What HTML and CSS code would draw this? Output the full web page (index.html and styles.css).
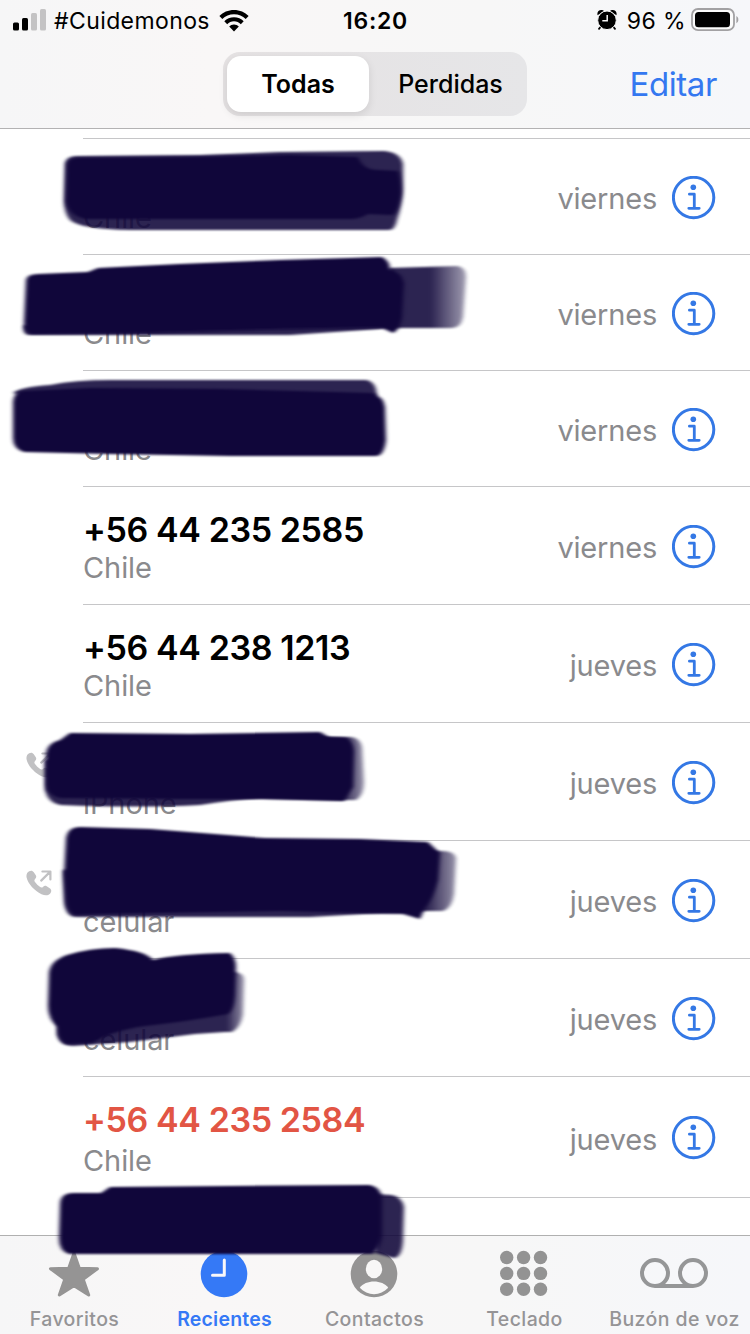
FILE: index.html
```html
<!DOCTYPE html>
<html lang="es">
<head>
  <meta charset="UTF-8">
  <meta name="viewport" content="width=device-width, initial-scale=1.0">
  <title>Recientes</title>
  <link rel="stylesheet" href="styles.css">
</head>
<body>

  <!-- Shared symbols -->
  <svg class="defs" width="0" height="0">
    <symbol id="info" viewBox="0 0 44 44">
      <circle cx="21.600" cy="21.500" r="20.200" fill="none" stroke="#3478e5" stroke-width="3"/>
      <circle cx="21.300" cy="11.200" r="2.800" fill="#3478e5"/>
      <path d="M17.400 18.200H22.300V32.200M16.800 32.300H27.200" fill="none" stroke="#3478e5" stroke-width="2.800" stroke-linecap="round" stroke-linejoin="round"/>
    </symbol>
    <symbol id="outgoing" viewBox="0 0 26 26">
      <path d="M3.200 1.200C5 .2 6.800 .6 7.800 2.200L9.800 5.300C10.600 6.700 10.300 7.800 9.100 9C8 10.100 8.200 10.900 9.400 12.500C10.600 14.200 11.900 15.500 13.500 16.600C15.100 17.800 15.900 18 17 16.900C18.200 15.700 19.300 15.500 20.700 16.300L23.700 18.200C25.500 19.400 25.700 21.200 24.600 22.900C22.900 25.400 19.800 26.200 15.500 24.200C8.600 21 1.800 13.600 .6 7.500C0 4.400 1.200 2.300 3.200 1.200Z" fill="#c1c1c3"/>
      <path d="M15.200 10.600L24 1.900M16.400 1.500H24.400V9.500" fill="none" stroke="#c1c1c3" stroke-width="2.200" stroke-linecap="round" stroke-linejoin="round"/>
    </symbol>
  </svg>

  <div class="phone">
    <header class="header">
      <!-- Status bar -->
      <div class="status-bar">
        <div class="status-left">
          <svg class="signal" width="34" height="22" viewBox="0 0 34 22">
            <rect x="0" y="13.500" width="6" height="8" rx="1.500"/>
            <rect x="9" y="9" width="6" height="12.500" rx="1.500"/>
            <rect x="18" y="4" width="6" height="17.500" rx="1.500" fill="#c4c3c4"/>
            <rect x="27" y="0" width="6" height="21.500" rx="1.500" fill="#c4c3c4"/>
          </svg>
          <span class="carrier">#Cuidemonos</span>
          <svg class="wifi" width="30" height="22" viewBox="0 0 30 22">
            <path d="M15 0C9.200 0 4 2.300 .4 6L3.300 9C6.300 5.900 10.400 4.200 15 4.200S23.700 5.900 26.700 9L29.600 6C26 2.300 20.800 0 15 0Z"/>
            <path d="M15 7.200C11.200 7.200 7.800 8.700 5.300 11.200L8.200 14.200C10 12.400 12.300 11.300 15 11.300S20 12.400 21.800 14.200L24.700 11.200C22.200 8.700 18.800 7.200 15 7.200Z"/>
            <path d="M15 14.400C13.100 14.400 11.400 15.200 10.200 16.400L15 21.500L19.800 16.400C18.600 15.200 16.900 14.400 15 14.400Z"/>
          </svg>
        </div>
        <div class="clock">16:20</div>
        <div class="status-right">
          <svg class="alarm" width="20" height="20" viewBox="0 0 20 20">
            <path d="M.6 5.200C-.3 2.500 1.600 .1 4.300 .1C5.500 .1 6.300 .5 6.900 1.100ZM19.400 5.200C20.300 2.500 18.400 .1 15.700 .1C14.500 .1 13.700 .5 13.100 1.100Z"/>
            <path d="M3.500 17L2 18.800M16.500 17L18 18.800" stroke="#000" stroke-width="1.800" stroke-linecap="round"/>
            <circle cx="10" cy="10.300" r="9.300" stroke="#f7f7f7" stroke-width="1"/>
            <path d="M10.200 5V10.700H5.300" fill="none" stroke="#f7f7f7" stroke-width="1.500"/>
          </svg>
          <span class="percent">96 %</span>
          <svg class="battery" width="48" height="24" viewBox="0 0 48 24">
            <rect x="1" y="1" width="42" height="21.200" rx="6" fill="#fbfbfb" stroke="#a2a1a3" stroke-width="1.800"/>
            <rect x="4" y="4" width="35" height="15.200" rx="3.500"/>
            <path d="M45.400 8C48 9.500 48 13.800 45.400 15.200Z" fill="#a2a1a3"/>
          </svg>
        </div>
      </div>

      <!-- Filter and edit -->
      <div class="nav-bar">
        <div class="segmented">
          <div class="segment selected">Todas</div>
          <div class="segment">Perdidas</div>
        </div>
        <div class="edit">Editar</div>
      </div>
    </header>

    <!-- Call list -->
    <main class="calls">
      <div class="call short">
        <div class="call-type"></div>
        <div class="call-body">
          <div class="caller"><div class="name"></div><div class="label">Chile</div></div>
          <div class="day">viernes</div>
          <svg class="info"><use href="#info"/></svg>
        </div>
      </div>
      <div class="call short">
        <div class="call-type"></div>
        <div class="call-body">
          <div class="caller"><div class="name"></div><div class="label">Chile</div></div>
          <div class="day">viernes</div>
          <svg class="info"><use href="#info"/></svg>
        </div>
      </div>
      <div class="call short">
        <div class="call-type"></div>
        <div class="call-body">
          <div class="caller"><div class="name"></div><div class="label">Chile</div></div>
          <div class="day">viernes</div>
          <svg class="info"><use href="#info"/></svg>
        </div>
      </div>
      <div class="call">
        <div class="call-type"></div>
        <div class="call-body">
          <div class="caller"><div class="name">+56 44 235 2585</div><div class="label">Chile</div></div>
          <div class="day">viernes</div>
          <svg class="info"><use href="#info"/></svg>
        </div>
      </div>
      <div class="call">
        <div class="call-type"></div>
        <div class="call-body">
          <div class="caller"><div class="name">+56 44 238 1213</div><div class="label">Chile</div></div>
          <div class="day">jueves</div>
          <svg class="info"><use href="#info"/></svg>
        </div>
      </div>
      <div class="call">
        <div class="call-type"><svg class="outgoing"><use href="#outgoing"/></svg></div>
        <div class="call-body">
          <div class="caller"><div class="name"></div><div class="label">iPhone</div></div>
          <div class="day">jueves</div>
          <svg class="info"><use href="#info"/></svg>
        </div>
      </div>
      <div class="call">
        <div class="call-type"><svg class="outgoing"><use href="#outgoing"/></svg></div>
        <div class="call-body">
          <div class="caller"><div class="name"></div><div class="label">celular</div></div>
          <div class="day">jueves</div>
          <svg class="info"><use href="#info"/></svg>
        </div>
      </div>
      <div class="call">
        <div class="call-type"></div>
        <div class="call-body">
          <div class="caller"><div class="name"></div><div class="label">celular</div></div>
          <div class="day">jueves</div>
          <svg class="info"><use href="#info"/></svg>
        </div>
      </div>
      <div class="call tall missed">
        <div class="call-type"></div>
        <div class="call-body">
          <div class="caller"><div class="name">+56 44 235 2584</div><div class="label">Chile</div></div>
          <div class="day">jueves</div>
          <svg class="info"><use href="#info"/></svg>
        </div>
      </div>
      <div class="call last">
        <div class="call-type"></div>
        <div class="call-body"></div>
      </div>
    </main>

    <!-- Tab bar -->
    <nav class="tab-bar">
      <div class="tab">
        <svg width="52" height="48" viewBox="0 0 52 48">
          <path d="M26 3L31.300 18.200L49.500 18.700L35.200 29.300L40.700 45L26 35.700L11.300 45L16.800 29.300L2.500 18.700L20.700 18.200Z" fill="#959494" stroke="#959494" stroke-width="3" stroke-linejoin="round"/>
        </svg>
        <span>Favoritos</span>
      </div>
      <div class="tab active">
        <svg width="48" height="48" viewBox="0 0 48 48">
          <circle cx="24" cy="24" r="23.300" fill="#3579f6"/>
          <path d="M24.300 10V25.200H12.500" fill="none" stroke="#f9f7f9" stroke-width="3" stroke-linecap="round" stroke-linejoin="round"/>
        </svg>
        <span>Recientes</span>
      </div>
      <div class="tab">
        <svg width="48" height="48" viewBox="0 0 48 48">
          <circle cx="24" cy="24" r="23.300" fill="#959494"/>
          <ellipse cx="24" cy="19" rx="8.200" ry="9.200" fill="#f8f7f7"/>
          <path d="M9.800 37.700C15.500 29.300 32.500 29.300 38.200 37.700C30.500 46.300 17.500 46.300 9.800 37.700Z" fill="#f8f7f7"/>
        </svg>
        <span>Contactos</span>
      </div>
      <div class="tab">
        <svg width="48" height="48" viewBox="0 0 48 48" fill="#939393">
          <circle cx="6.700" cy="7.500" r="6.700"/><circle cx="23.600" cy="7.500" r="6.700"/><circle cx="40.500" cy="7.500" r="6.700"/>
          <circle cx="6.700" cy="23.400" r="6.700"/><circle cx="23.600" cy="23.400" r="6.700"/><circle cx="40.500" cy="23.400" r="6.700"/>
          <circle cx="6.700" cy="39.200" r="6.700"/><circle cx="23.600" cy="39.200" r="6.700"/><circle cx="40.500" cy="39.200" r="6.700"/>
        </svg>
        <span>Teclado</span>
      </div>
      <div class="tab">
        <svg width="70" height="48" viewBox="0 0 70 48" fill="none" stroke="#959697" stroke-width="4">
          <circle cx="16" cy="23" r="13"/><circle cx="54" cy="23" r="13"/>
          <path d="M16 36H54"/>
        </svg>
        <span>Buzón de voz</span>
      </div>
    </nav>

    <!-- Marker strokes covering the names -->
    <svg class="marker" viewBox="0 0 750 1334">
      <defs>
        <filter id="soft" x="-5%" y="-10%" width="110%" height="120%" color-interpolation-filters="sRGB">
          <feGaussianBlur stdDeviation="2 1.100"/>
        </filter>
        <linearGradient id="fade">
          <stop offset="0.550" stop-color="#10063a"/>
          <stop offset="1" stop-color="#10063a" stop-opacity="0.450"/>
        </linearGradient>
        <linearGradient id="fade-short">
          <stop offset="0.100" stop-color="#10063a"/>
          <stop offset="1" stop-color="#10063a" stop-opacity="0.500"/>
        </linearGradient>
      </defs>
      <g class="wash" filter="url(#soft)">
        <path d="M65 163Q67 156 76 156L200 155L280 152L385 151Q401 153 403 164L403 190Q402 205 397 220Q395 230 389 230L130 230Q80 229 70 220Q64 213 64 200Z"/>
        <path d="M388 268L458 266Q466 268 466 277L463 317Q461 328 452 328L390 328Z" fill="url(#fade)"/>
        <path d="M24 325L150 330L395 325L380 329L290 335L28 335Q22 333 24 325Z"/>
        <path d="M13 393Q20 387 50 385Q75 380 110 380L367 380Q376 382 377 395L370 400L40 400Z"/>
        <path d="M45 760L45 790Q48 803 60 805Q140 808 200 805Q230 800 262 798L340 800L340 737L320 737Z"/>
        <path d="M340 737L351 737Q360 738 362 747L364 782Q364 795 356 800L340 800Z" fill="url(#fade-short)"/>
        <path d="M63 870L64 900Q65 917 76 917L310 917L400 912L424 911L424 845Z"/>
        <path d="M424 851L443 851Q454 851 456 858L454 894Q452 908 443 911L424 911Z" fill="url(#fade-short)"/>
        <path d="M57 1015L57 1035Q60 1046 72 1046L130 1042L195 1034L225 1032L225 972Z"/>
        <path d="M225 972L235 972Q244 973 244 980L243 1014Q241 1027 232 1032L225 1032Z" fill="url(#fade-short)"/>
        <path d="M375 1194L392 1195Q402 1197 404 1207L403 1240Q402 1257 394 1258L375 1253Z"/>
      </g>
      <g class="ink" filter="url(#soft)">
        <path d="M67 165Q68 158 78 158L200 157L290 155L358 157Q363 170 378 170L398 171Q401 180 401 194Q398 213 392 215L368 214Q360 219 350 219L85 219Q69 215 66 202Z"/>
        <path d="M26 280Q27 274 38 274L88 272L98 268L180 264L280 260L350 258L382 257Q390 261 390 269Q402 273 404 283L402 318Q399 331 393 333L382 328L270 330L150 333L35 334Q24 335 24 322Z"/>
        <path d="M13 402Q14 391 25 391L90 388L220 389L372 393Q384 397 385 407L386 440Q384 456 376 456L230 456L110 454L24 452Q13 449 13 438Z"/>
        <path d="M46 754Q47 743 60 740L70 733L190 734L320 732L329 737L347 738Q354 743 354 752L353 787L344 801L260 799L180 799L60 798Q47 795 46 785Z"/>
        <path d="M66 838Q68 827 80 827L150 829Q215 834 265 838L360 839L428 842L440 853L438 880Q433 899 425 908L420 919L403 914L280 911L100 914L74 915Q66 910 66 898L64 875Z"/>
        <path d="M49 973Q50 961 67 955Q90 948 115 948Q146 951 153 960Q175 954 230 953Q236 958 236 967L235 995Q234 1010 228 1014Q190 1021 145 1026Q110 1031 93 1043L66 1044Q57 1039 58 1027Q48 1020 48 1005Z"/>
        <path d="M60 1205Q60 1193 73 1193L101 1193L110 1187L230 1186L370 1185Q382 1188 382 1200L382 1236Q380 1248 373 1254L69 1254Q59 1251 59 1238Z"/>
      </g>
    </svg>
  </div>

</body>
</html>
```
FILE: styles.css
```css
body {
  margin: 0;
  background-color: #fff;
  font-family: Inter, "Liberation Sans", sans-serif;
  color: #000;
}
.defs {
  position: absolute;
}
.phone {
  position: relative;
  display: flex;
  flex-direction: column;
  width: 750px;
  height: 1334px;
  overflow: hidden;
}
.header {
  box-sizing: border-box;
  height: 129px;
  border-bottom: 1px solid #b3b2b3;
  background: linear-gradient(to right, #f6f6f7, #f9f7f7 28%, #f7f7f7 65%, #f6f7fa);
}

/* Status bar */
.status-bar {
  display: grid;
  grid-template-columns: 1fr auto 1fr;
  align-items: center;
  height: 42px;
  padding: 0 12px 0 13px;
  font-size: 23px;
}
.status-left, .status-right {
  display: flex;
  align-items: center;
}
.status-right {
  justify-content: flex-end;
}
.signal {
  margin-bottom: 3px;
}
.carrier {
  margin-left: 7px;
  letter-spacing: 0.4px;
}
.wifi {
  margin: 0 0 1px 9px;
}
.clock {
  font-weight: 600;
  letter-spacing: 0.7px;
}
.alarm {
  margin: 0 10px 3px 0;
}
.percent {
  letter-spacing: 0.4px;
}
.battery {
  margin: 0 -1px 3px 5px;
}

/* Navigation bar */
.nav-bar {
  display: grid;
  grid-template-columns: 1fr 304px 1fr;
  align-items: center;
  height: 64px;
  padding: 10px 33px 0 33px;
}
.segmented {
  grid-column: 2;
  display: flex;
  box-sizing: border-box;
  height: 64px;
  padding: 4px;
  border-radius: 17px;
  background: linear-gradient(to right, #e5e2e3, #e6e6e8);
}
.segment {
  flex: 1;
  padding-left: 9px;
  line-height: 56px;
  text-align: center;
  font-size: 25px;
  font-weight: 500;
}
.segment.selected {
  flex: 0 0 142px;
  padding-left: 0;
  border-radius: 14px;
  background-color: #fff;
  box-shadow: 0 3px 8px rgba(0, 0, 0, 0.1);
  font-weight: 600;
}
.edit {
  text-align: right;
  font-size: 33px;
  letter-spacing: -0.4px;
  color: #3478f0;
}

/* Call list */
.calls {
  flex: 1;
  padding-top: 9px;
}
.call {
  display: flex;
  height: 118px;
}
.call.short {
  height: 116px;
}
.call.tall {
  height: 121px;
}
.call.last {
  height: 38px;
}
.call-type {
  box-sizing: border-box;
  width: 83px;
  padding: 30px 0 0 26px;
}
.outgoing {
  display: block;
  width: 26px;
  height: 26px;
}
.call-body {
  flex: 1;
  display: flex;
  align-items: center;
  box-sizing: border-box;
  border-top: 1px solid #c6c6c8;
  padding: 2px 34px 0 0;
}
.caller {
  flex: 1;
  align-self: flex-start;
  padding-top: 20px;
}
.name {
  height: 41px;
  line-height: 41px;
  font-size: 34px;
  font-weight: 600;
  letter-spacing: -0.4px;
}
.label {
  line-height: 36px;
  font-size: 29px;
  letter-spacing: -0.1px;
  color: #8a8a8d;
}
.short .label {
  margin-top: -2px;
}
.tall .label {
  margin-top: 3px;
}
.missed .name {
  color: #e25544;
}
.day {
  padding-top: 2px;
  font-size: 29px;
  letter-spacing: -0.2px;
  color: #8a8a8d;
}
.info {
  width: 44px;
  height: 44px;
  margin-left: 15px;
}

/* Tab bar */
.tab-bar {
  display: grid;
  grid-template-columns: repeat(5, 150px);
  box-sizing: border-box;
  height: 99px;
  margin-left: -1px;
  width: 751px;
  border-top: 1px solid #b0b0b0;
  background: linear-gradient(to right, #f6f6f7, #f9f7f7 28%, #f7f7f7 65%, #f6f7fa);
}
.tab {
  display: flex;
  flex-direction: column;
  align-items: center;
  padding-top: 14px;
  font-size: 19.5px;
  font-weight: 500;
  letter-spacing: 0.4px;
  color: #959496;
}
.tab span {
  margin: 9px 0 0 1px;
  line-height: 24px;
  white-space: nowrap;
}
.tab.active {
  font-weight: 600;
  letter-spacing: 0.2px;
  color: #3579f6;
}

/* Marker strokes */
.marker {
  position: absolute;
  top: 0;
  left: 0;
  width: 750px;
  height: 1334px;
  fill: #10063a;
}
.wash {
  opacity: 0.88;
}
```
